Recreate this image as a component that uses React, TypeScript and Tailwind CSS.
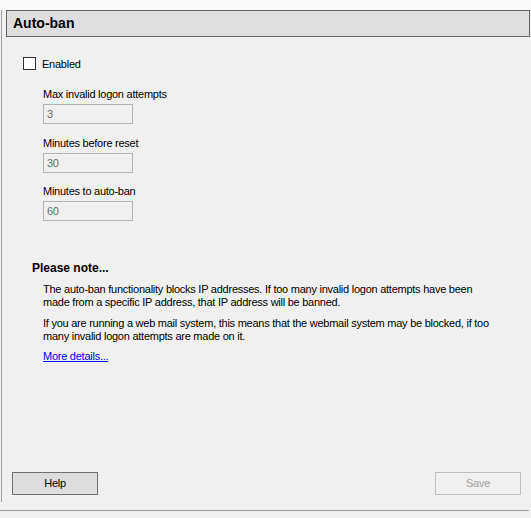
import React, { useState } from "react";

function Field({ label, value, top }: { label: string; value: string; top: string }) {
  return (
    <div className={top}>
      <div className="h-[13px] whitespace-nowrap">{label}</div>
      <div className="mt-[3px] w-[90px] h-[20px] border border-[#b4b4b4] bg-[#f0f0f0] pl-[3px] flex items-center text-[#6d6d6d]">
        {value}
      </div>
    </div>
  );
}

function App() {
  const [enabled, setEnabled] = useState(false);

  return (
    <div className="w-[531px] h-[518px] overflow-hidden bg-[#f0f0f0] text-black text-[11px] leading-[13px] tracking-[-0.25px] font-['Liberation_Sans',Arial,sans-serif]">
      <div className="h-[10px] bg-[#f9f9f9]" />
      <div className="ml-px h-[492px] border-l border-[#a0a0a0] pl-[4px] flex flex-col">
        <div className="w-[524px] h-[27px] border border-[#646464] bg-[#dedede] pl-[6px] flex items-center text-[14px] font-bold tracking-normal">
          Auto-ban
        </div>

        <label className="mt-[20px] ml-[17px] h-[13px] flex items-center gap-[6px] cursor-pointer">
          <span
            onClick={() => setEnabled(!enabled)}
            className="w-[13px] h-[13px] border border-[#333333] bg-white flex items-center justify-center text-[10px]"
          >
            {enabled ? "✓" : ""}
          </span>
          <span className="translate-y-[1px]">Enabled</span>
        </label>

        <div className="ml-[37px]">
          <Field label="Max invalid logon attempts" value="3" top="mt-[18px]" />
          <Field label="Minutes before reset" value="30" top="mt-[13px]" />
          <Field label="Minutes to auto-ban" value="60" top="mt-[12px]" />
        </div>

        <div className="mt-[40px] ml-[26px] text-[12px] leading-[14px] font-bold tracking-normal">Please note...</div>
        <div className="ml-[37px]">
          <p className="mt-[8px]">
            The auto-ban functionality blocks IP addresses. If too many invalid logon attempts have been
            <br />
            made from a specific IP address, that IP address will be banned.
          </p>
          <p className="mt-[8px]">
            If you are running a web mail system, this means that the webmail system may be blocked, if too
            <br />
            many invalid logon attempts are made on it.
          </p>
          <a href="#" className="block mt-[7px] w-fit text-[#0000ff] underline">
            More details...
          </a>
        </div>

        <div className="flex-1" />
        <div className="mb-[7px] ml-[6px] w-[509px] flex justify-between">
          <button className="w-[86px] h-[23px] border border-[#707070] bg-[#dddddd]">Help</button>
          <button disabled className="w-[86px] h-[23px] border border-[#bfbfbf] bg-[#f0f0f0] text-[#a0a0a0]">
            Save
          </button>
        </div>
      </div>
      <div className="mt-[8px] h-px w-[529px] bg-[#a0a0a0]" />
    </div>
  );
}

export default App;
